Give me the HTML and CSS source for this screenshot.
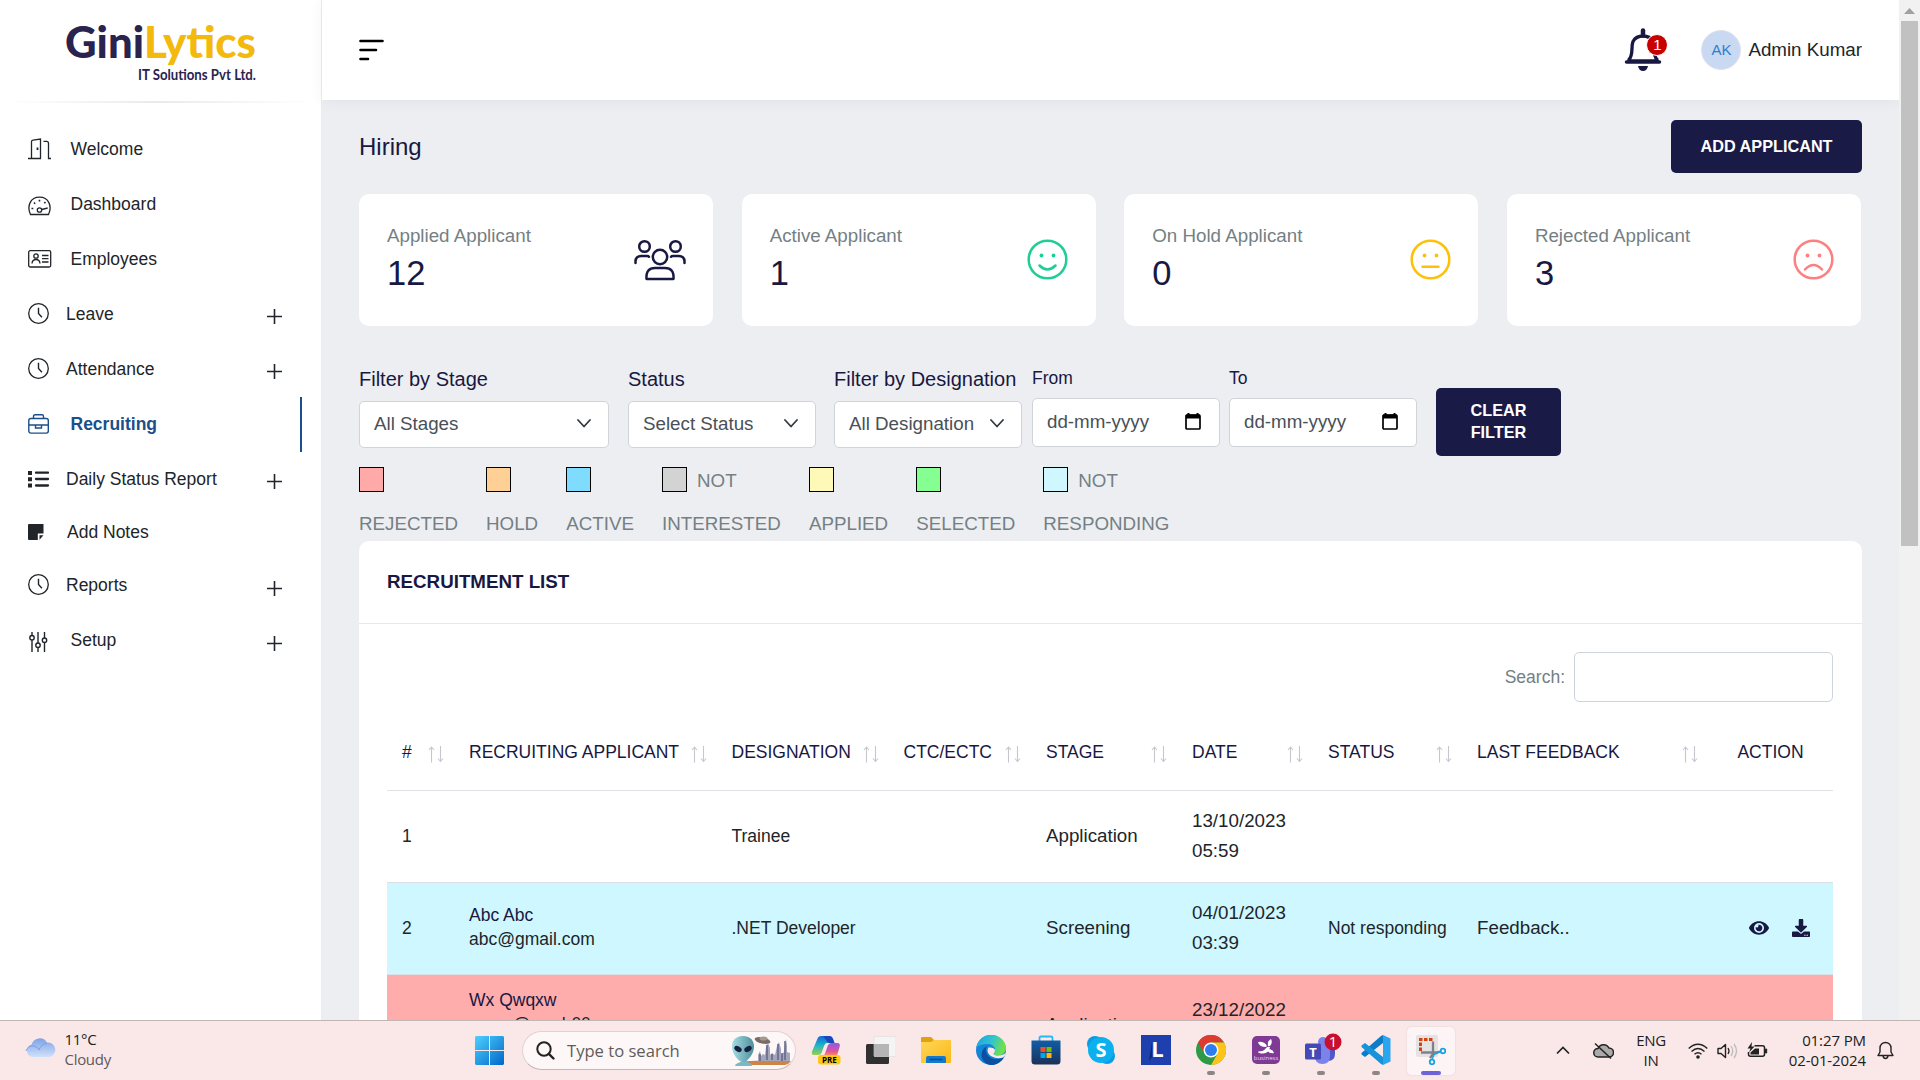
FILE: index.html
```html
<!DOCTYPE html>
<html lang="en">
<head>
<meta charset="utf-8">
<title>Hiring</title>
<link rel="stylesheet" href="styles.css">
</head>
<body>
<svg class="defs" width="0" height="0" aria-hidden="true">
  <defs>
    <linearGradient id="gWin" x1="0" y1="0" x2="1" y2="1"><stop offset="0" stop-color="#4fd0ff"/><stop offset="1" stop-color="#0067c8"/></linearGradient>
    <linearGradient id="gCloud" x1="0" y1="0" x2="0" y2="1"><stop offset="0" stop-color="#7ea2e6"/><stop offset="1" stop-color="#cfe0fa"/></linearGradient>
    <linearGradient id="gCopL" x1="0" y1="0" x2="0" y2="1"><stop offset="0" stop-color="#1168d6"/><stop offset=".5" stop-color="#1fb6c8"/><stop offset="1" stop-color="#9bd04a"/></linearGradient>
    <linearGradient id="gCopR" x1="0" y1="0" x2="0" y2="1"><stop offset="0" stop-color="#8c5be8"/><stop offset=".6" stop-color="#e0529b"/><stop offset="1" stop-color="#ff9a4a"/></linearGradient>
    <linearGradient id="gEdge" x1="0" y1="0" x2="1" y2=".3"><stop offset="0" stop-color="#1fa0dd"/><stop offset=".55" stop-color="#2fc4d0"/><stop offset="1" stop-color="#6fe04c"/></linearGradient>
    <linearGradient id="gFold" x1="0" y1="0" x2="1" y2="1"><stop offset="0" stop-color="#ffd75a"/><stop offset="1" stop-color="#fbb814"/></linearGradient>
    <linearGradient id="gStore" x1="0" y1="0" x2="0" y2="1"><stop offset="0" stop-color="#0f5ea8"/><stop offset="1" stop-color="#1b3158"/></linearGradient>
    <linearGradient id="gAlien" x1="0" y1="0" x2="1" y2="0"><stop offset="0" stop-color="#a5dce2"/><stop offset="1" stop-color="#4f8e9c"/></linearGradient>
    <symbol id="clock" viewBox="0 0 22 22"><circle cx="10.5" cy="10.5" r="9.8" fill="none" stroke="currentColor" stroke-width="1.3"/><path d="M10.5 4.7v5.8l3.4 3.8" fill="none" stroke="currentColor" stroke-width="1.4"/></symbol>
    <symbol id="plus" viewBox="0 0 15 15"><path d="M7.5 0v15M0 7.5h15" stroke="currentColor" stroke-width="1.6"/></symbol>
    <symbol id="sort" viewBox="0 0 16 17"><path d="M3.5 16.500V1M1 4l2.500-3L6 4M12.500 0v15.500M10 12.500l2.500 3 2.500-3" fill="none" stroke="#c6c6d0" stroke-width="1.1"/></symbol>
    <symbol id="chev" viewBox="0 0 14 9"><path d="M1 1l6 6.500L13 1" fill="none" stroke="#343a40" stroke-width="1.800" stroke-linecap="round" stroke-linejoin="round"/></symbol>
    <symbol id="cal" viewBox="0 0 16 17"><path d="M3.500 0v2M12.500 0v2" stroke="#000" stroke-width="2"/><rect x="1" y="2" width="14" height="14" rx="1" fill="none" stroke="#000" stroke-width="1.7"/><path d="M1 1.500h14v4H1z"/></symbol>
  </defs>
</svg>

<div class="screen">
  <div class="app">
    <aside class="sidebar">
      <div class="brand">
        <svg width="200" height="80" viewBox="0 0 200 80">
          <text x="0" y="43" class="brand-a" textLength="79" lengthAdjust="spacingAndGlyphs">Gini</text>
          <text x="79" y="43" class="brand-b" textLength="112" lengthAdjust="spacingAndGlyphs">Lytics</text>
          <text x="73" y="65" class="brand-c" textLength="118" lengthAdjust="spacingAndGlyphs">IT Solutions Pvt Ltd.</text>
        </svg>
      </div>
      <div class="brand-line"></div>
      <ul class="menu">
        <li class="wide"><svg class="ico" width="24" height="22" viewBox="0 0 24 22"><g fill="none" stroke="currentColor" stroke-width="1.3"><path d="M0 20.500h13M3.500 20.500V3.500Q3.500 2.500 5 2.200L12.500 1v19.500M15.500 3.300h3q2 0 2 2v15.200H23"/><path d="M9.500 9.500v2.500" stroke-width="1.800"/></g></svg>Welcome</li>
        <li class="wide"><svg class="ico low2" width="24" height="20" viewBox="0 0 24 20"><g fill="none" stroke="currentColor" stroke-width="1.3"><path d="M2.500 18.500C-1.500 10 2.500 1.200 11.500 1.200S24.500 10 20.500 18.500z"/><circle cx="11.500" cy="14" r="2.200"/><path d="M13.700 13.500l6-1.500"/><path d="M3.500 12.500h1.800M6 6.500l1.200 1.200M11.500 3.700v1.800M17.500 6l-1.200 1.200" stroke-width="1.600"/></g></svg>Dashboard</li>
        <li class="wide"><svg class="ico" width="24" height="18" viewBox="0 0 24 18"><g fill="none" stroke="currentColor" stroke-width="1.300"><rect x=".7" y=".7" width="22" height="16.300" rx="1.500"/><circle cx="8" cy="6" r="2.200"/><path d="M4 13.500q.3-4 4-4t4 4M14 5.500h6.500M14 8.700h6.500M14 12h6.500"/></g></svg>Employees</li>
        <li><svg class="ico" width="22" height="22"><use href="#clock"/></svg>Leave<svg class="plus" width="15" height="15"><use href="#plus"/></svg></li>
        <li><svg class="ico" width="22" height="22"><use href="#clock"/></svg>Attendance<svg class="plus" width="15" height="15"><use href="#plus"/></svg></li>
        <li class="wide active"><svg class="ico" width="22" height="20" viewBox="0 0 22 20"><g fill="none" stroke="currentColor" stroke-width="1.400"><rect x=".8" y="4.500" width="19.500" height="14.600" rx="2"/><path d="M5.500 4.500V2.500Q5.500 .8 7 .8h7q1.500 0 1.500 1.700v2M1 11h6.500M13.500 11H20M7.500 11h6v3h-6z"/></g></svg>Recruiting</li>
        <li><svg class="ico" width="22" height="18" viewBox="0 0 22 18"><path d="M0 1h4v4H0zM0 7.300h4v4H0zM0 13.500h4v4H0z" fill="currentColor"/><path d="M8 2.700h12M8 9h12M8 15.500h12" stroke="currentColor" stroke-width="2.300" stroke-linecap="round"/></svg>Daily Status Report<svg class="plus" width="15" height="15"><use href="#plus"/></svg></li>
        <li class="short"><svg class="ico" width="17" height="17" viewBox="0 0 17 17"><path d="M1 0h14.500v9.500H9.800V16H1Q0 16 0 15V1Q0 0 1 0zM11.500 11.200h4l-4 4.500z" fill="currentColor"/></svg>Add Notes</li>
        <li><svg class="ico" width="22" height="22"><use href="#clock"/></svg>Reports<svg class="plus late" width="15" height="15"><use href="#plus"/></svg></li>
        <li class="wide"><svg class="ico low2" width="20" height="20" viewBox="0 0 20 20"><g fill="none" stroke="currentColor" stroke-width="1.400"><path d="M4 0v3.500M4 8v12M10 0v11M10 15.500V20M16.500 0v6M16.500 10.500V20"/><circle cx="4" cy="5.700" r="2.200"/><circle cx="10" cy="13.200" r="2.200"/><circle cx="16.500" cy="8.200" r="2.200"/></g></svg>Setup<svg class="plus late" width="15" height="15"><use href="#plus"/></svg></li>
      </ul>
    </aside>

    <div class="main">
      <header class="topbar">
        <svg width="26" height="22" viewBox="0 0 26 22"><path d="M1.500 2h22M1.500 11h15.500M1.500 20h7.500" stroke="#000" stroke-width="2.600" stroke-linecap="round"/></svg>
        <div class="user">
          <div class="bell">
            <svg width="38" height="44" viewBox="0 0 38 44"><path d="M5 31.500C9.500 27 7 18 9 13.500Q12 8 19 8T29 13.500C31 18 28.500 27 33 31.500V33H5z" fill="none" stroke="#181842" stroke-width="3.300" stroke-linejoin="round"/><path d="M19 2.500v5" stroke="#181842" stroke-width="4.500" stroke-linecap="round"/><path d="M2.500 34h33" stroke="#181842" stroke-width="3.500" stroke-linecap="round"/><path d="M14 38h10q-1 5-5 5t-5-5z" fill="#181842"/></svg>
            <span class="badge">1</span>
          </div>
          <span class="avatar">AK</span>
          <span class="name">Admin Kumar</span>
        </div>
      </header>

      <div class="content">
        <div class="page-head"><h1>Hiring</h1><button class="btn add">ADD APPLICANT</button></div>

        <div class="stats">
          <div class="stat"><div><p>Applied Applicant</p><b>12</b></div>
            <svg width="52" height="42" viewBox="0 0 52 42"><g fill="none" stroke="#181842" stroke-width="2.500" stroke-linecap="round"><circle cx="10.500" cy="7.500" r="5.300"/><circle cx="41.500" cy="7.500" r="5.300"/><circle cx="26" cy="18" r="7.200"/><path d="M1.500 24v-1.500q0-5.500 6-5.500h5.500q1.500 0 2 .8M50.500 24v-1.500q0-5.500-6-5.500H39q-1.500 0-2 .8"/><path d="M12.500 40q-.8-11 8.500-11h10q9.300 0 8.500 11z" stroke-linejoin="round"/></g></svg></div>
          <div class="stat"><div><p>Active Applicant</p><b>1</b></div>
            <svg width="41" height="41" viewBox="0 0 41 41"><g fill="none" stroke="#1fce96" stroke-width="2.500" stroke-linecap="round"><circle cx="20.500" cy="20.500" r="18.800"/><path d="M12.500 26.500q8 8 16 0"/></g><g fill="#1fce96"><circle cx="14.500" cy="16.500" r="1.900"/><circle cx="26.500" cy="16.500" r="1.900"/></g></svg></div>
          <div class="stat"><div><p>On Hold Applicant</p><b>0</b></div>
            <svg width="41" height="41" viewBox="0 0 41 41"><g fill="none" stroke="#fdc10a" stroke-width="2.500" stroke-linecap="round"><circle cx="20.500" cy="20.500" r="18.800"/><path d="M12.500 27.700h16"/></g><g fill="#fdc10a"><circle cx="14.500" cy="16.500" r="1.900"/><circle cx="26.500" cy="16.500" r="1.900"/></g></svg></div>
          <div class="stat"><div><p>Rejected Applicant</p><b>3</b></div>
            <svg width="41" height="41" viewBox="0 0 41 41"><g fill="none" stroke="#fd7f7f" stroke-width="2.500" stroke-linecap="round"><circle cx="20.500" cy="20.500" r="18.800"/><path d="M12 30.500q8.500-9 17 0"/></g><g fill="#fd7f7f"><circle cx="14.500" cy="16.500" r="1.900"/><circle cx="26.500" cy="16.500" r="1.900"/></g></svg></div>
        </div>

        <div class="filters">
          <div class="field stage"><label>Filter by Stage</label><div class="select">All Stages<svg width="14" height="9"><use href="#chev"/></svg></div></div>
          <div class="field status"><label>Status</label><div class="select">Select Status<svg width="14" height="9"><use href="#chev"/></svg></div></div>
          <div class="field desig"><label>Filter by Designation</label><div class="select">All Designation<svg width="14" height="9"><use href="#chev"/></svg></div></div>
          <div class="field from"><label class="small">From</label><div class="date">dd-mm-yyyy<svg width="16" height="17"><use href="#cal"/></svg></div></div>
          <div class="field to"><label class="small">To</label><div class="date">dd-mm-yyyy<svg width="16" height="17"><use href="#cal"/></svg></div></div>
          <button class="btn clear">CLEAR<br>FILTER</button>
        </div>

        <div class="legend">
          <div><span><i class="sw rejected"></i></span><span>REJECTED</span></div>
          <div><span><i class="sw hold"></i></span><span>HOLD</span></div>
          <div><span><i class="sw live"></i></span><span>ACTIVE</span></div>
          <div><span><i class="sw notint"></i>NOT</span><span>INTERESTED</span></div>
          <div><span><i class="sw applied"></i></span><span>APPLIED</span></div>
          <div><span><i class="sw selected"></i></span><span>SELECTED</span></div>
          <div><span><i class="sw notresp"></i>NOT</span><span>RESPONDING</span></div>
        </div>

        <section class="list">
          <h2>RECRUITMENT LIST</h2>
          <div class="list-body">
            <div class="search"><label>Search:</label><div class="search-box"></div></div>
            <table>
              <colgroup><col class="c1"><col class="c2"><col class="c3"><col class="c4"><col class="c5"><col class="c6"><col class="c7"><col class="c8"><col class="c9"></colgroup>
              <thead><tr>
                <th><div>#<svg width="16" height="17"><use href="#sort"/></svg></div></th>
                <th><div>RECRUITING APPLICANT<svg width="16" height="17"><use href="#sort"/></svg></div></th>
                <th><div>DESIGNATION<svg width="16" height="17"><use href="#sort"/></svg></div></th>
                <th><div>CTC/ECTC<svg width="16" height="17"><use href="#sort"/></svg></div></th>
                <th><div>STAGE<svg width="16" height="17"><use href="#sort"/></svg></div></th>
                <th><div>DATE<svg width="16" height="17"><use href="#sort"/></svg></div></th>
                <th><div>STATUS<svg width="16" height="17"><use href="#sort"/></svg></div></th>
                <th><div>LAST FEEDBACK<svg width="16" height="17"><use href="#sort"/></svg></div></th>
                <th><div class="mid">ACTION</div></th>
              </tr></thead>
              <tbody>
                <tr><td>1</td><td></td><td>Trainee</td><td></td><td class="lg">Application</td><td class="when">13/10/2023<br>05:59</td><td></td><td></td><td></td></tr>
                <tr class="row-notresp"><td>2</td><td class="who"><em>Abc Abc</em><br>abc@gmail.com</td><td>.NET Developer</td><td></td><td class="lg">Screening</td><td class="when">04/01/2023<br>03:39</td><td>Not responding</td><td class="lg">Feedback..</td>
                  <td><div class="actions">
                    <svg width="20" height="18" viewBox="0 0 576 512"><path fill="#181842" d="M572.52 241.400C518.290 135.590 410.930 64 288 64S57.680 135.640 3.480 241.410a32.350 32.350 0 0 0 0 29.190C57.710 376.410 165.070 448 288 448s230.320-71.640 284.520-177.410a32.350 32.350 0 0 0 0-29.190zM288 400a144 144 0 1 1 144-144 143.930 143.930 0 0 1-144 144zm0-240a95.310 95.310 0 0 0-25.310 3.790 47.850 47.850 0 0 1-66.900 66.900A95.780 95.780 0 1 0 288 160z"/></svg>
                    <svg width="18" height="18" viewBox="0 0 512 512"><path fill="#181842" d="M216 0h80c13.300 0 24 10.700 24 24v168h87.700c17.800 0 26.700 21.500 14.100 34.100L269.700 378.300c-7.500 7.500-19.800 7.500-27.300 0L90.100 226.100c-12.600-12.600-3.700-34.100 14.100-34.100H192V24c0-13.300 10.700-24 24-24zm296 376v112c0 13.300-10.700 24-24 24H24c-13.300 0-24-10.700-24-24V376c0-13.300 10.700-24 24-24h146.700l49 49c20.100 20.100 52.500 20.100 72.600 0l49-49H488c13.300 0 24 10.700 24 24zm-124 88c0-11-9-20-20-20s-20 9-20 20 9 20 20 20 20-9 20-20zm64 0c0-11-9-20-20-20s-20 9-20 20 9 20 20 20 20-9 20-20z"/></svg>
                  </div></td></tr>
                <tr class="row-rejected"><td></td><td class="who top"><em>Wx Qwqxw</em><br>wxqw@wxqh00</td><td></td><td></td><td class="lg">Application</td><td class="when">23/12/2022<br>&nbsp;</td><td></td><td></td><td></td></tr>
              </tbody>
            </table>
          </div>
        </section>
      </div>
    </div>

    <div class="scrollbar"><svg width="11" height="6" viewBox="0 0 11 6"><path d="M0 6L5.500 0 11 6z" fill="#a0a0a0"/></svg><div class="thumb"></div></div>
  </div>

  <footer class="taskbar">
    <div class="weather">
      <svg width="31" height="21" viewBox="0 0 31 21"><path d="M7 20a6.500 6.500 0 0 1-.5-12.500A8.500 8.500 0 0 1 22 5.500 7.300 7.300 0 0 1 24 20z" fill="url(#gCloud)"/><path d="M1 14q2-6 8-5 4 1 5 4 2-6 8-7" fill="none" stroke="#7c9ee0" stroke-width="1"/></svg>
      <div><span>11°C</span><span class="dim">Cloudy</span></div>
    </div>
    <div class="dock">
      <svg class="win" width="29" height="29" viewBox="0 0 29 29"><path d="M1 0h13v14H0V1zM15 0h13l1 1v13H15zM0 15h14v14H1l-1-1zM15 15h14v13l-1 1H15z" fill="url(#gWin)"/></svg>
      <div class="find">
        <svg width="19" height="19" viewBox="0 0 19 19"><circle cx="8" cy="8" r="6.700" fill="none" stroke="#222" stroke-width="2"/><path d="M12.800 12.800L17.500 17.500" stroke="#222" stroke-width="2.400" stroke-linecap="round"/></svg>
        <span>Type to search</span>
        <svg width="61" height="32" viewBox="0 0 61 32"><path d="M4 30q6-4 15-4 22-1 41 0-2 3-6 4H10z" fill="#cd8447"/><path d="M27 26V20l2-4 1 5 2-2 2 1 1-8 2-4 2 5v7l2-2 3 2 2-9 2-4 2 7v6l3-3 1-8 1-5 1 7v6l3 1v8z" fill="#a3a5b8"/><path d="M29 19v7M36 10v15M41 19v6M47 9v16M51 18v8M54 6v19" stroke="#63658a" stroke-width="1.500"/><path d="M4 31q1-3 6-4v-4h6v4q5 1 5 4z" fill="#79bac5"/><path d="M12 1C4 1 1 6 1 12s6 15 11 15 11-9 11-15S20 1 12 1z" fill="url(#gAlien)"/><ellipse cx="7" cy="14" rx="4" ry="2.500" transform="rotate(30 7 14)" fill="#16203f"/><ellipse cx="17" cy="14" rx="4" ry="2.500" transform="rotate(-30 17 14)" fill="#16203f"/><ellipse cx="31.500" cy="5.500" rx="8" ry="3" transform="rotate(12 31.500 5.500)" fill="#776b64"/><ellipse cx="32.500" cy="3.500" rx="4" ry="2" fill="#a59990"/></svg>
      </div>
      <div class="apps">
        <span><svg width="30" height="30" viewBox="0 0 30 30"><path d="M7 2.500Q8 1 10 1h8q3 0 4 3l1.500 4H16q-2 0-3 3l-2.500 7q-.8 2-3 2H3q-3 0-2-3.500z" fill="url(#gCopL)"/><path d="M12 1h6q3 0 4 3l1.500 4H18q-2 0-3-3z" fill="#1b48b8"/><path d="M23.500 8h3q3 0 2.200 3.500L26.500 19q-.8 2.500-3 2.500H11q2 0 3-3l2.500-7q1-3.500 4-3.500z" fill="url(#gCopR)"/><rect x="7" y="20" width="22.500" height="9.500" rx="3" fill="#fdc910"/><text x="18.300" y="27.700" text-anchor="middle" class="pre">PRE</text></svg></span>
        <span><svg width="30" height="30" viewBox="0 0 30 30"><rect x="0" y="9" width="23" height="20" rx="1.500" fill="#303030"/><rect x="8" y="1.500" width="22" height="20" rx="1" fill="#f4f4f4" stroke="#ddd" stroke-width=".6"/><path d="M8 9h15v12.500H8z" fill="#b5b5b5"/></svg></span>
        <span><svg width="30" height="30" viewBox="0 0 30 30"><path d="M0 3q0-1 1-1h9l3 3-1 5H0z" fill="#e3a008"/><path d="M0 7h10l3-2h16q1 0 1 1v21q0 1-1 1H1q-1 0-1-1z" fill="url(#gFold)"/><path d="M5 28v-5q0-2 2-2h16q2 0 2 2v5z" fill="#1378cf"/><path d="M9 24.500h12" stroke="#0a4c8d" stroke-width="1.300" stroke-linecap="round"/></svg></span>
        <span><svg width="30" height="30" viewBox="0 0 30 30"><circle cx="15" cy="15" r="15" fill="#1484d8"/><path d="M.2 13C2 4 8 0 15 0c9 0 15 6.500 15 13 0 5-4 7.500-8 7.500-3 0-4.500-1-4.500-2 0-1.300 1.500-1.500 1.500-4 0-3-3-5.500-7-5.500C7 9 2.500 10 .2 13z" fill="url(#gEdge)"/><path d="M10.500 11Q9 14 10.500 18c2 5 8 7.500 14 5.500q3-1 3-.300C24 28 19.500 30 15 30 8 29 4 23 6 17q1.500-4 4.500-6z" fill="#0c4f9e"/><path d="M12.500 12.500q5.500-.500 6.500 2.500 0 2-1.500 3.500 0 2 5 2 5 0 7.500-3-1 4-3 5-6 2-11-1c-4-2-5.500-6-3.500-9z" fill="#fae8e9"/></svg></span>
        <span><svg width="30" height="30" viewBox="0 0 30 30"><path d="M8.500 7V3q0-1.500 1.500-1.500h10q1.500 0 1.500 1.500v4" fill="none" stroke="#2ab6f0" stroke-width="1.800"/><path d="M.500 5.500h29V26q0 3.500-3.500 3.500H4Q.500 29.500.500 26z" fill="url(#gStore)"/><path d="M9.500 12h5v5h-5z" fill="#f25022"/><path d="M15.500 12h5v5h-5z" fill="#7fba00"/><path d="M9.500 18h5v5h-5z" fill="#00a4ef"/><path d="M15.500 18h5v5h-5z" fill="#ffb900"/></svg></span>
        <span><svg width="30" height="30" viewBox="0 0 30 30"><circle cx="9" cy="9" r="8" fill="#0a9be0"/><circle cx="21" cy="21" r="8" fill="#0a9be0"/><circle cx="15" cy="15" r="13" fill="#0cb0ee"/><text x="15" y="22" text-anchor="middle" class="skype">S</text></svg></span>
        <span><svg width="30" height="30" viewBox="0 0 30 30"><path d="M0 0h30v30H0z" fill="#1e3fae"/><path d="M8 26l3-19v15z" fill="#0e2670"/><text x="16.500" y="22" text-anchor="middle" class="ell">L</text></svg></span>
        <span class="open"><svg width="30" height="30" viewBox="0 0 30 30"><circle cx="15" cy="15" r="15" fill="#2d9a47"/><path d="M15 7.500h13A15 15 0 0 0 2 7.500l6.500 11.300z" fill="#dd3b30"/><path d="M28 7.500H15l6.500 11.300L15 30A15 15 0 0 0 28 7.500z" fill="#fcc419"/><circle cx="15" cy="15" r="7.500" fill="#fff"/><circle cx="15" cy="15" r="6" fill="#2d7df0"/></svg></span>
        <span class="open"><svg width="30" height="30" viewBox="0 0 30 30"><rect x="1" y="1" width="28" height="28" rx="5" fill="#7e3a94"/><g fill="#fff"><path d="M17 11q-1-5 3-7 2 4-1 7z"/><path d="M15 12q-7 0-8-5 6-1 9 4z"/><path d="M19 12q-1 6-7 6.500-5 0-5-2 6 0 8-3.500 2-2 4-1z"/><path d="M17 14q5 0 6 4-4 1-6.500-2z"/></g><text x="15" y="24.500" text-anchor="middle" class="biz">business</text></svg></span>
        <span class="open"><svg class="teams" width="38" height="32" viewBox="0 0 38 32"><circle cx="18" cy="9" r="5" fill="#7b83eb"/><path d="M22 13h8v8q0 7-7 7z" fill="#5059c9"/><path d="M10 13h15v10q0 8-7.500 8T10 23z" fill="#7b83eb"/><rect y="10.500" width="16" height="16" rx="1.500" fill="#4549b5"/><text x="8" y="23.500" text-anchor="middle" class="tee">T</text><circle cx="28" cy="9" r="8.500" fill="#c8102e"/><text x="28" y="14.300" text-anchor="middle" class="one">1</text></svg></span>
        <span class="open"><svg width="30" height="30" viewBox="0 0 30 30"><path d="M22 0l7.500 3.500v23L22 30z" fill="#2ba6ee"/><path d="M22 0v8L4 22l-3.500-2.500v-1.500L20 1z" fill="#0d7cc7"/><path d="M22 30v-8L4 8 .5 10.500V12L20 29z" fill="#1593dc"/></svg></span>
        <span class="current"><svg width="30" height="30" viewBox="0 0 30 30"><rect x="0" y="0" width="22" height="22" rx="2" fill="#e4e2e3"/><path d="M4.500 16V4.500h12" fill="none" stroke="#d8400f" stroke-width="3" stroke-dasharray="3.500 1.500"/><path d="M17 6.500V19l-3 4M5 17.500h15l4-1" fill="none" stroke="#7d8288" stroke-width="2.300"/><circle cx="27" cy="16" r="2.300" fill="none" stroke="#1ba0e2" stroke-width="1.800"/><circle cx="16" cy="27" r="2.300" fill="none" stroke="#1ba0e2" stroke-width="1.800"/><path d="M16 24.500l2-5 6.500-3" fill="none" stroke="#1ba0e2" stroke-width="1.500"/></svg></span>
      </div>
    </div>
    <div class="tray">
      <svg class="t-up" width="14" height="9" viewBox="0 0 14 9"><path d="M1 7.500l6-6 6 6" fill="none" stroke="#222" stroke-width="1.700"/></svg>
      <svg class="t-cloud" width="21" height="18" viewBox="0 0 21 18"><path d="M5 15a4.200 4.200 0 0 1 0-8.500 6 6 0 0 1 11-.500 4.500 4.500 0 0 1 0 9z" fill="#aaa" stroke="#222" stroke-width="1.500"/><path d="M2 1.500l16 15" stroke="#222" stroke-width="1.500"/></svg>
      <div class="lang">ENG<br>IN</div>
      <svg class="t-wifi" width="20" height="16" viewBox="0 0 20 16"><g fill="none" stroke="#222" stroke-width="1.400"><path d="M.700 5.500q9.300-8.500 18.600 0M3.500 8.500q6.500-6 13 0M6.500 11.300q3.500-3.300 7 0"/></g><circle cx="10" cy="14" r="1.800" fill="#222"/></svg>
      <svg class="t-vol" width="21" height="16" viewBox="0 0 21 16"><path d="M1 5.500h3L8.500 1.500v13L4 10.500H1z" fill="none" stroke="#222" stroke-width="1.400" stroke-linejoin="round"/><path d="M11 5q2 3 0 6" fill="none" stroke="#222" stroke-width="1.300"/><path d="M14 3q3.500 5 0 10M17 1q5 7 0 14" fill="none" stroke="#bbb" stroke-width="1.300"/></svg>
      <svg class="t-bat" width="21" height="17" viewBox="0 0 21 17"><path d="M7.500 3.800h8q2 0 2 2v6.500q0 2-2 2H3.500q-2 0-2-2V10" fill="none" stroke="#222" stroke-width="1.500"/><path d="M18.500 7h1.200v4h-1.200z" stroke="#222" fill="#222"/><path d="M8 6.500h4v6H3.500v-2z" fill="#222"/><path d="M5 0L.500 6.500h3L2 10.500 7.500 4.500H4.500z" fill="#222"/></svg>
      <div class="clock">01:27 PM<br>02-01-2024</div>
      <svg class="t-bell" width="17" height="19" viewBox="0 0 17 19"><path d="M1 14.500L3 11V7a5.500 5.500 0 0 1 11 0v4l2 3.500zM6 15q.5 2.500 2.500 2.500T11 15" fill="none" stroke="#222" stroke-width="1.400" stroke-linejoin="round"/></svg>
    </div>
  </footer>
</div>
</body>
</html>
```
FILE: styles.css
```css
* { box-sizing: border-box; }
body { margin: 0; font-family: "Liberation Sans", Arial, sans-serif; color: #212529; }
.defs { display: block; position: absolute; }
svg { display: block; flex: none; }
h1, h2, p, ul { margin: 0; padding: 0; font-weight: 400; }
.screen { width: 1920px; height: 1080px; overflow: hidden; display: flex; flex-direction: column; }
.app { height: 1020px; display: grid; grid-template-columns: 322px 1577px 21px; overflow: hidden; background: #edeef2; }

/* sidebar */
.sidebar { background: #fff; border-right: 1px solid #ebecf0; height: 1020px; }
.brand { height: 101px; padding: 15px 0 0 65px; }
.brand text { font-family: Lato, "Open Sans", sans-serif; font-weight: 900; }
.brand-a { font-size: 43px; fill: #2a2350; }
.brand-b { font-size: 43px; fill: #f3b90d; }
.brand-c { font-size: 15.5px; fill: #2a2350; }
.brand .brand-c { font-weight: 700; }
.brand-line { height: 2px; margin: 0 8px 0 5px; background: linear-gradient(90deg, #fff, #e9eaec 50%, #fff); }
.menu { list-style: none; width: 302px; padding-top: 18.5px; }
.menu li { height: 55px; display: flex; align-items: center; padding: 0 20px 0 28px; font-size: 17.5px; }
.menu li.short { height: 51px; }
.ico { margin-right: 16px; }
.menu .wide .ico { margin-right: 18.5px; }
.menu .active .ico { margin-right: 20.5px; }
.menu .wide:last-child .ico { margin-right: 22.5px; }
.menu .short .ico { margin-right: 22px; }
.low2 { margin-top: 4px; }
.plus { margin: 4px 0 0 auto; }
.plus.late { margin-top: 6px; }
.menu .active { border-right: 2px solid #1b4f8b; color: #1b4f8b; font-weight: 700; }

/* top bar */
.topbar { height: 100px; background: #fff; display: flex; align-items: center; justify-content: space-between; padding: 0 37px 0 36.5px; box-shadow: 0 2px 14px rgba(24, 24, 66, .05); }
.user { display: flex; align-items: center; }
.bell { position: relative; margin-right: 39px; }
.badge { position: absolute; left: 22px; top: 6px; width: 22px; height: 22px; border: 1px solid #fff; border-radius: 50%; background: #c80000; color: #fff; font-size: 15px; line-height: 20px; text-align: center; }
.avatar { width: 40px; height: 40px; border: 1px solid #dfe3ea; border-radius: 50%; background: #c9d9f2; color: #2f7fcb; font-size: 15px; line-height: 38px; text-align: center; margin-right: 7px; }
.name { font-size: 18.75px; line-height: 22px; }

/* page */
.content { padding: 20px 37px 0; }
.page-head { height: 53px; display: flex; justify-content: space-between; align-items: center; }
h1 { font-size: 24px; color: #181842; }
.btn { border: 0; padding: 0; border-radius: 5px; background: #1a1a46; color: #fff; font: 700 16.25px/22.5px "Liberation Sans", Arial, sans-serif; }
.add { width: 191px; height: 53px; }
.stats { margin-top: 21px; padding-right: 1px; display: grid; grid-template-columns: repeat(4, 1fr); gap: 28.500px; }
.stat { height: 132px; border-radius: 10px; background: #fff; display: flex; justify-content: space-between; padding: 31px 27.500px 0 28px; }
.stat p { font-size: 18.750px; line-height: 22px; color: #748083; }
.stat b { display: block; margin-top: 6px; font-weight: 400; font-size: 34.500px; line-height: 40px; color: #181842; }
.stat svg { margin-top: 14px; }

.filters { margin-top: 40px; height: 90px; display: flex; }
.field { width: 188px; }
.field.stage { width: 250px; margin-right: 19px; }
.field.status { margin-right: 18px; }
.field.desig { margin-right: 10px; }
.field.from { margin-right: 9px; }
.field.to { margin-right: 19px; }
.field label { display: block; height: 26px; margin-bottom: 9px; font-size: 20px; line-height: 26px; color: #181842; white-space: nowrap; }
.field label.small { height: 24px; line-height: 25px; margin-bottom: 8px; font-size: 17.500px; }
.select, .date { height: 47px; border: 1px solid #ced4da; border-radius: 5px; background: #fff; padding: 0 17px 2px 14px; display: flex; align-items: center; justify-content: space-between; font-size: 18.750px; color: #495057; }
.date { height: 49px; padding: 0 18px 2px 14px; }
.clear { width: 125px; height: 68px; margin-top: 22px; padding-bottom: 2px; }

.legend { height: 83px; margin-top: 2px; display: flex; gap: 28.100px; font-size: 18.750px; color: #748083; }
.legend span { height: 43px; display: flex; align-items: center; line-height: 23px; padding-top: 1px; }
.sw { width: 25px; height: 25px; border: 1px solid #000; margin: -1px 10px 0 0; }
.rejected { background: #ffa9a9; }
.hold { background: #ffd096; }
.live { background: #80dcff; }
.notint { background: #d3d3d3; }
.applied { background: #fff9b8; }
.selected { background: #85ff92; }
.notresp { background: #cff7ff; }

/* list */
.list { background: #fff; border-radius: 10px 10px 0 0; height: 700px; }
h2 { height: 83px; padding: 0 28px; border-bottom: 1px solid #e6e8eb; display: flex; align-items: center; font-size: 18.750px; font-weight: 700; color: #181842; }
.list-body { padding: 28px 29px 0 28px; }
.search { display: flex; justify-content: flex-end; align-items: center; gap: 9px; height: 50px; font-size: 17.500px; color: #748083; }
.search-box { width: 259px; height: 50px; border: 1px solid #ced4da; border-radius: 5px; }
table { width: 1446px; table-layout: fixed; border-collapse: collapse; font-size: 17.500px; }
.c1 { width: 67px; } .c2 { width: 262.500px; } .c3 { width: 172px; } .c4 { width: 142.500px; } .c5 { width: 146px; }
.c6 { width: 136px; } .c7 { width: 149px; } .c8 { width: 246px; } .c9 { width: 125px; }
th { height: 88px; padding: 0 10px 0 15px; font-weight: 400; color: #181842; text-align: left; white-space: nowrap; border-bottom: 1px solid #dfe2e6; }
th div { display: flex; justify-content: space-between; align-items: center; margin-top: 13px; }
th svg { margin-top: 5px; }
th .mid { justify-content: center; margin-left: -5px; margin-top: 13px; }
td { height: 92px; padding: 0 0 0 15px; white-space: nowrap; }
tbody tr { border-bottom: 1px solid #dcdfe3; }
.lg { font-size: 18.750px; }
.when { font-size: 18.750px; line-height: 30px; }
.who { line-height: 24px; padding-bottom: 2px; }
.who em { font-style: normal; color: #181842; }
.row-notresp { background: #cff7ff; }
.row-rejected { background: #ffacac; }
.row-rejected td { height: 101px; }
td.top { vertical-align: top; padding-top: 13px; }
.actions { display: flex; align-items: center; gap: 23px; padding: 0 0 0 26px; }
.actions svg:last-child { margin-top: -1px; }

/* scrollbar */
.scrollbar { background: #f1f1f1; display: flex; flex-direction: column; align-items: center; padding-top: 8px; }
.thumb { width: 17px; height: 525px; margin-top: 7px; background: #c1c1c1; }

/* taskbar */
.taskbar { height: 60px; border-top: 1px solid #c4b5b7; background: #fae8e9; display: flex; font-family: "Open Sans", "Noto Sans", sans-serif; color: #202020; }
.weather { width: 475px; display: flex; padding: 8px 0 0 24.500px; gap: 9px; font-size: 15px; line-height: 20px; }
.weather svg { margin-top: 8px; }
.weather span { display: block; letter-spacing: -.3px; }
.weather .dim { color: #5e5a5b; }
.dock { display: flex; align-items: center; height: 59px; }
.win { margin-right: 18px; }
.find { width: 274px; height: 39px; border: 1px solid #e6cfd1; border-bottom-color: #c9b4b6; border-radius: 20px; background: #fdf7f7; display: flex; align-items: center; padding: 0 3px 0 13px; margin-right: 2px; font-size: 16.600px; color: #5f5c5c; }
.find span { margin: 0 auto 0 12px; }
.apps { display: flex; }
.apps span { width: 55px; height: 48px; display: flex; justify-content: center; align-items: center; position: relative; }
.apps .teams { margin-left: 6px; margin-top: -4px; }
.apps svg { margin-top: -1px; }
.open::after, .current::after { content: ""; position: absolute; bottom: 0; width: 8px; height: 4px; border-radius: 2px; background: #8d8485; }
.apps .current { width: 48px; margin-left: 4px; background: #fdf5f5; border-radius: 5px; box-shadow: 0 0 1px 1px #f1dfe1; }
.current::after { width: 20px; background: #6b64d6; }
.pre { font: 700 8px "Open Sans", sans-serif; }
.skype { font: 700 20px "Open Sans", sans-serif; fill: #fff; }
.ell { font: 700 22px "Open Sans", sans-serif; fill: #fff; }
.biz { font: 6px "Open Sans", sans-serif; fill: #e7d3ee; }
.tee { font: 700 13px "Open Sans", sans-serif; fill: #fff; }
.one { font: 15px "Open Sans", sans-serif; fill: #fff; }
.tray { margin-left: auto; width: 364px; height: 59px; display: flex; align-items: center; font-size: 15px; line-height: 20px; }
.lang { width: 30px; margin: 0 22px 0 22px; text-align: center; letter-spacing: -.3px; white-space: nowrap; }
.t-cloud { margin-left: 23px; }
.t-vol { margin-left: 9px; }
.t-bat { margin-left: 9px; }
.clock { width: 90px; margin-left: 8px; text-align: right; white-space: nowrap; letter-spacing: -.1px; margin-top: -2px; }
.lang { margin-top: -1px; }
.t-bell { margin-left: 11px; }
```
